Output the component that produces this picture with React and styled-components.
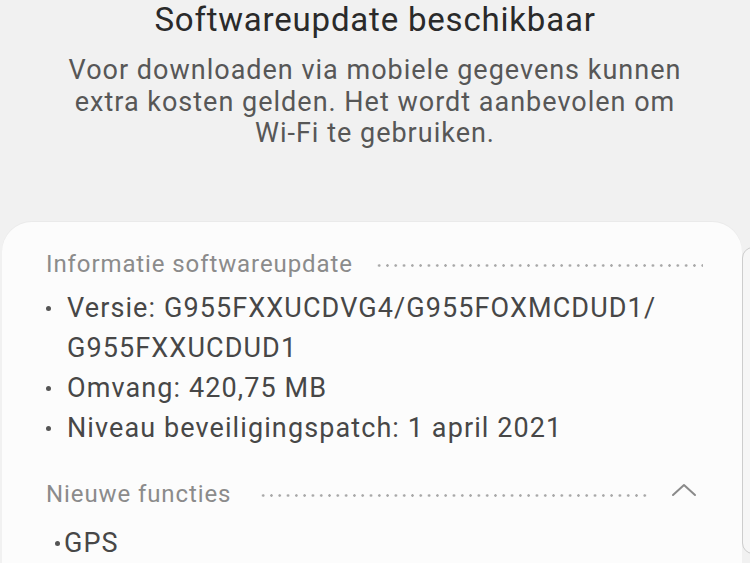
import React from 'react';
import styled, { createGlobalStyle } from 'styled-components';

const GlobalStyle = createGlobalStyle`
  html, body {
    margin: 0;
    padding: 0;
    background: #f1f1f1;
  }
  body {
    font-family: Roboto, 'Noto Sans', Arial, sans-serif;
    overflow: hidden;
  }
`;

const Screen = styled.div`
  width: 750px;
  height: 563px;
  position: relative;
  overflow: hidden;
  background: #f1f1f1;
`;

const Intro = styled.div`
  display: flex;
  flex-direction: column;
  align-items: center;
  text-align: center;
`;

const Title = styled.h1`
  margin: 0;
  font-size: 33px;
  line-height: 40px;
  letter-spacing: 0.8px;
  font-weight: 400;
  color: #2a2a2a;
`;

const Notice = styled.p`
  margin: 15px 0 0;
  font-size: 27px;
  line-height: 31.6px;
  letter-spacing: 1px;
  color: #575757;
  white-space: nowrap;
`;

const Card = styled.div`
  margin: 72px 8px 0 2px;
  background: #fcfcfc;
  border-radius: 30px 30px 0 0;
  padding: 23px 39px 0 44px;
  height: 400px;
  box-shadow: 0 -1px 1px rgba(0, 0, 0, 0.03);
`;

const SectionHead = styled.div`
  display: flex;
  align-items: center;
  height: 38px;
  gap: ${p => p.$gap}px;
`;

const SectionLabel = styled.span`
  font-size: 24px;
  letter-spacing: 0.9px;
  color: #8b8b8b;
  white-space: nowrap;
`;

const Dots = styled.span`
  flex: 1;
  height: 3px;
  margin-top: 3px;
  background-image: radial-gradient(circle, #a9a9a9 1.1px, transparent 1.5px);
  background-size: 8.3px 3px;
  background-repeat: repeat-x;
  background-position: left center;
`;

const Chevron = styled.svg`
  width: 30px;
  height: 16px;
  margin: -8px 4px 0 -7px;
  flex-shrink: 0;
`;

const List = styled.ul`
  list-style: none;
  margin: ${p => p.$top}px 0 0;
  padding: 0;
`;

const Item = styled.li`
  display: flex;
  align-items: flex-start;
  font-size: 27px;
  line-height: 40px;
  letter-spacing: 1.1px;
  color: #474747;
`;

const Bullet = styled.span`
  flex-shrink: 0;
  width: 5px;
  height: 5px;
  border-radius: 50%;
  background: #555;
  margin: 18px ${p => (p.$tight ? 4 : 16)}px 0 ${p => (p.$tight ? 9 : 0)}px;
`;

const Gap = styled.div`
  height: ${p => p.$h}px;
`;

const EdgeTab = styled.div`
  position: absolute;
  left: 742px;
  top: 247px;
  width: 30px;
  height: 305px;
  border: 1.5px solid #cdcdcd;
  border-radius: 11px;
  background: #f6f6f6;
`;

const App = () => (
  <Screen>
    <GlobalStyle />
    <Intro>
      <Title>Softwareupdate beschikbaar</Title>
      <Notice>
        Voor downloaden via mobiele gegevens kunnen<br />
        extra kosten gelden. Het wordt aanbevolen om<br />
        Wi-Fi te gebruiken.
      </Notice>
    </Intro>

    <Card>
      <SectionHead $gap={22}>
        <SectionLabel>Informatie softwareupdate</SectionLabel>
        <Dots />
      </SectionHead>
      <List $top={5}>
        <Item><Bullet /><span>Versie: G955FXXUCDVG4/G955FOXMCDUD1/<br />G955FXXUCDUD1</span></Item>
        <Item><Bullet /><span>Omvang: 420,75 MB</span></Item>
        <Item><Bullet /><span>Niveau beveiligingspatch: 1 april 2021</span></Item>
      </List>
      <Gap $h={27} />
      <SectionHead $gap={28}>
        <SectionLabel>Nieuwe functies</SectionLabel>
        <Dots />
        <Chevron viewBox="0 0 30 16" fill="none">
          <path d="M4 13 L15 3 L26 13" stroke="#8a8a8a" strokeWidth="2" strokeLinecap="round" strokeLinejoin="round" />
        </Chevron>
      </SectionHead>
      <List $top={10}>
        <Item><Bullet $tight /><span>GPS</span></Item>
      </List>
    </Card>
    <EdgeTab />
  </Screen>
);

export default App;
